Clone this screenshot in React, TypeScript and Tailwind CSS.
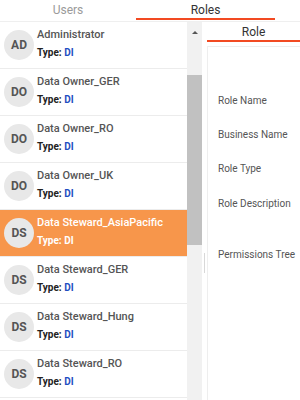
import React from "react";

const items = [
  { ab: "AD", name: "Administrator" },
  { ab: "DO", name: "Data Owner_GER" },
  { ab: "DO", name: "Data Owner_RO" },
  { ab: "DO", name: "Data Owner_UK" },
  { ab: "DS", name: "Data Steward_AsiaPacific", sel: true },
  { ab: "DS", name: "Data Steward_GER" },
  { ab: "DS", name: "Data Steward_Hung" },
  { ab: "DS", name: "Data Steward_RO" },
];

export default function App() {
  return (
    <div
      className="w-[300px] h-[400px] overflow-hidden bg-white flex flex-col"
      style={{ fontFamily: "Roboto, 'Liberation Sans', sans-serif" }}
    >
      <div className="h-[22px] flex border-b border-[#efefef] shrink-0">
        <div className="w-[136px] flex justify-center items-start pt-[1px] text-[12px] text-[#9a9a9a]">Users</div>
        <div className="w-[139px] h-[20px] flex justify-center items-start pt-[1px] text-[12px] text-[#333] border-b-2 border-[#f24a22]">Roles</div>
      </div>
      <div className="flex flex-1 min-h-0">
        <div className="w-[187px] flex flex-col overflow-hidden">
          {items.map((it, i) => (
            <div
              key={i}
              className={`h-[47px] shrink-0 flex items-center border-b border-[#ececec] ${it.sel ? "bg-[#f7964b]" : "bg-white"}`}
            >
              <div className="ml-[4px] w-[30px] h-[30px] rounded-full bg-[#e8e8e8] flex items-center justify-center text-[12px] font-bold text-[#555]">
                {it.ab}
              </div>
              <div className="ml-[3px] flex flex-col pb-[3px]">
                <div className={`text-[11px] font-medium leading-[14px] ${it.sel ? "text-white" : "text-[#555]"}`}>{it.name}</div>
                <div className="mt-[4px] text-[10px] font-bold leading-[13px]">
                  <span className={it.sel ? "text-white" : "text-[#222]"}>Type: </span>
                  <span className={it.sel ? "text-white" : "text-[#1e4fc2]"}>DI</span>
                </div>
              </div>
            </div>
          ))}
        </div>
        <div className="w-[15px] bg-[#f1f1f1] flex flex-col items-center">
          <div className="h-[20px] flex items-center justify-center">
            <div className="w-0 h-0 border-l-[3px] border-r-[3px] border-b-[3px] border-l-transparent border-r-transparent border-b-[#555]" />
          </div>
          <div className="mt-[33px] w-[15px] h-[170px] bg-[#c1c1c1]" />
        </div>
        <div className="flex-1 flex flex-col relative">
          <div className="absolute left-[2px] top-[231px] w-px h-[20px] bg-[#d8d8d8]" />
          <div className="ml-[5px] h-[20px] flex justify-center items-start pt-[1px] text-[12px] text-[#333] border-b-2 border-[#f24a22]">Role</div>
          <div className="ml-[5px] mt-[4px] flex-1 border-l border-t border-[#eeeeee] flex flex-col pl-[10px] pt-[48px] text-[10px] text-[#555]">
            <div className="h-[34px] leading-[12px]">Role Name</div>
            <div className="h-[34px] leading-[12px]">Business Name</div>
            <div className="h-[35px] leading-[12px]">Role Type</div>
            <div className="h-[51px] leading-[12px]">Role Description</div>
            <div className="leading-[12px]">Permissions Tree</div>
          </div>
        </div>
      </div>
    </div>
  );
}
